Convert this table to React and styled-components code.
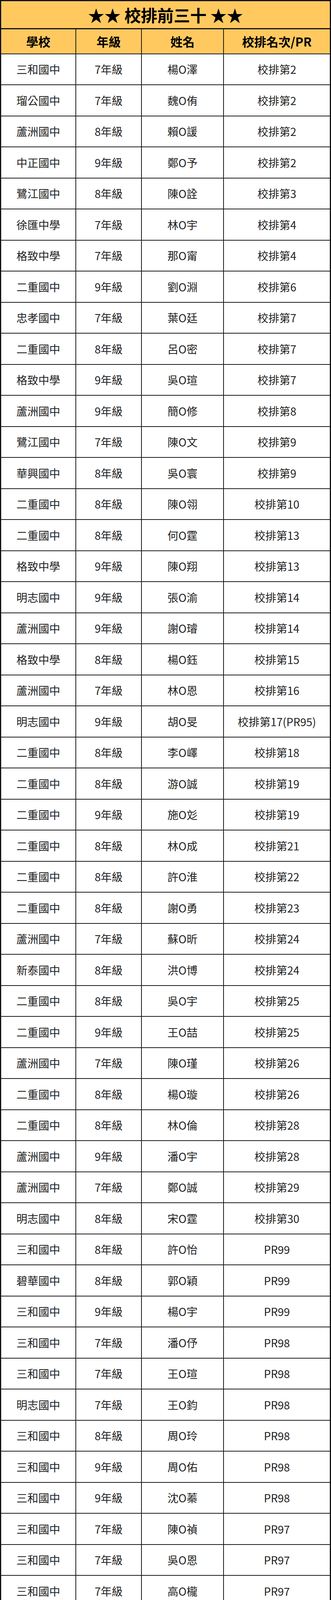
import React from 'react'
import styled, { createGlobalStyle } from 'styled-components'

const rows = [
  ['三和國中', '7年級', '楊O澤', '校排第2'],
  ['瑠公國中', '7年級', '魏O侑', '校排第2'],
  ['蘆洲國中', '8年級', '賴O諼', '校排第2'],
  ['中正國中', '9年級', '鄭O予', '校排第2'],
  ['鷺江國中', '8年級', '陳O詮', '校排第3'],
  ['徐匯中學', '7年級', '林O宇', '校排第4'],
  ['格致中學', '7年級', '那O甯', '校排第4'],
  ['二重國中', '9年級', '劉O淵', '校排第6'],
  ['忠孝國中', '7年級', '葉O廷', '校排第7'],
  ['二重國中', '8年級', '呂O密', '校排第7'],
  ['格致中學', '9年級', '吳O瑄', '校排第7'],
  ['蘆洲國中', '9年級', '簡O修', '校排第8'],
  ['鷺江國中', '7年級', '陳O文', '校排第9'],
  ['華興國中', '8年級', '吳O寰', '校排第9'],
  ['二重國中', '8年級', '陳O翎', '校排第10'],
  ['二重國中', '8年級', '何O霆', '校排第13'],
  ['格致中學', '9年級', '陳O翔', '校排第13'],
  ['明志國中', '9年級', '張O渝', '校排第14'],
  ['蘆洲國中', '9年級', '謝O璿', '校排第14'],
  ['格致中學', '8年級', '楊O鈺', '校排第15'],
  ['蘆洲國中', '7年級', '林O恩', '校排第16'],
  ['明志國中', '9年級', '胡O旻', '校排第17(PR95)'],
  ['二重國中', '8年級', '李O嶧', '校排第18'],
  ['二重國中', '8年級', '游O誠', '校排第19'],
  ['二重國中', '9年級', '施O彣', '校排第19'],
  ['二重國中', '8年級', '林O成', '校排第21'],
  ['二重國中', '8年級', '許O淮', '校排第22'],
  ['二重國中', '8年級', '謝O勇', '校排第23'],
  ['蘆洲國中', '7年級', '蘇O昕', '校排第24'],
  ['新泰國中', '8年級', '洪O博', '校排第24'],
  ['二重國中', '8年級', '吳O宇', '校排第25'],
  ['二重國中', '9年級', '王O喆', '校排第25'],
  ['蘆洲國中', '7年級', '陳O瑾', '校排第26'],
  ['二重國中', '8年級', '楊O璇', '校排第26'],
  ['二重國中', '8年級', '林O倫', '校排第28'],
  ['蘆洲國中', '9年級', '潘O宇', '校排第28'],
  ['蘆洲國中', '7年級', '鄭O誠', '校排第29'],
  ['明志國中', '8年級', '宋O霆', '校排第30'],
  ['三和國中', '8年級', '許O怡', 'PR99'],
  ['碧華國中', '8年級', '郭O穎', 'PR99'],
  ['三和國中', '9年級', '楊O宇', 'PR99'],
  ['三和國中', '7年級', '潘O伃', 'PR98'],
  ['三和國中', '7年級', '王O瑄', 'PR98'],
  ['明志國中', '7年級', '王O鈞', 'PR98'],
  ['三和國中', '8年級', '周O玲', 'PR98'],
  ['三和國中', '9年級', '周O佑', 'PR98'],
  ['三和國中', '9年級', '沈O蓁', 'PR98'],
  ['三和國中', '7年級', '陳O禎', 'PR97'],
  ['三和國中', '7年級', '吳O恩', 'PR97'],
  ['三和國中', '7年級', '高O櫳', 'PR97'],
  ['三和國中', '8年級', '羅O晴', 'PR97'],
  ['三和國中', '8年級', '方O安', 'PR97'],
  ['三和國中', '8年級', '余O奇', 'PR97'],
  ['三和國中', '8年級', '張O靜', 'PR97'],
  ['三和國中', '9年級', '曾O彤', 'PR97'],
  ['三和國中', '9年級', '張O芸', 'PR97'],
  ['碧華國中', '9年級', '鐘O匀', 'PR97'],
  ['三和國中', '7年級', '黃O絢', 'PR96'],
  ['三和國中', '8年級', '連O捷', 'PR96'],
  ['三和國中', '8年級', '徐O紘', 'PR96'],
  ['三和國中', '9年級', '林O汝', 'PR96'],
  ['三和國中', '7年級', '王O嫙', 'PR95'],
  ['三和國中', '8年級', '林O寓', 'PR95'],
  ['三和國中', '8年級', '張O宜', 'PR95'],
  ['三和國中', '8年級', '許O祈', 'PR95'],
  ['三和國中', '8年級', '陳O翔', 'PR95'],
  ['三和國中', '7年級', '尤O恩', 'PR94'],
  ['三和國中', '7年級', '吳O辰', 'PR94'],
  ['三和國中', '7年級', '游O妍', 'PR94'],
  ['三和國中', '8年級', '吳O呈', 'PR94'],
  ['三和國中', '9年級', '劉O祐', 'PR94'],
  ['三和國中', '9年級', '蔡O芯', 'PR94'],
  ['三和國中', '7年級', '范O綺', 'PR93'],
  ['三和國中', '8年級', '周O純', 'PR93'],
  ['三和國中', '8年級', '陳O蓁', 'PR93'],
  ['三和國中', '9年級', '洪O欣', 'PR93'],
  ['三和國中', '9年級', '鄭O彥', 'PR93'],
  ['三和國中', '7年級', '蔡O陽', 'PR92'],
  ['三和國中', '7年級', '張O瑋', 'PR92'],
  ['三和國中', '9年級', '洪O穎', 'PR92'],
  ['三和國中', '7年級', '楊O恩', 'PR91'],
  ['三和國中', '8年級', '張O聖', 'PR91'],
  ['三和國中', '9年級', '周O亭', 'PR91'],
  ['三和國中', '7年級', '黃O禎', 'PR90'],
  ['三和國中', '8年級', '陳O寧', 'PR90'],
  ['三和國中', '8年級', '李O辰', 'PR90'],
  ['三和國中', '8年級', '梁O衛', 'PR90'],
]

const headers = ['學校', '年級', '姓名', '校排名次/PR']

const App = () => {
  return (
    <>
      <GlobalStyle />
      <Table>
        <TitleBar>★★ 校排前三十 ★★</TitleBar>
        <HeadRow>
          {headers.map((h) => (
            <Cell key={h} $head>{h}</Cell>
          ))}
        </HeadRow>
        {rows.map((r, i) => (
          <Row key={i}>
            {r.map((v, j) => (
              <Cell key={j}>{v}</Cell>
            ))}
          </Row>
        ))}
      </Table>
    </>
  )
}

const GlobalStyle = createGlobalStyle`
  html, body {
    margin: 0;
    padding: 0;
    background: #fff;
  }
  body {
    font-family: "Noto Sans CJK TC", "Noto Sans", sans-serif;
  }
`

const Table = styled.div`
  width: 100%;
  max-width: 847px;
  box-sizing: border-box;
  border: 3px solid #111;
  display: flex;
  flex-direction: column;
  background: #fff;
`

const TitleBar = styled.div`
  height: 68.5px;
  display: flex;
  align-items: center;
  justify-content: center;
  background: #ffc95f;
  color: #000;
  font-size: 42px;
  font-weight: 700;
`

const Grid = styled.div`
  display: grid;
  grid-template-columns: 190px 168px 210px 1fr;
  box-sizing: border-box;
`

const HeadRow = styled(Grid)`
  height: 65px;
  border-top: 3px solid #111;
  background: #ffc95f;
`

const Row = styled(Grid)`
  height: 79.5px;
  border-top: 2px solid #1c1c1c;
`

const Cell = styled.div`
  display: flex;
  align-items: center;
  justify-content: center;
  white-space: nowrap;
  font-size: ${(p) => (p.$head ? '31px' : '28px')};
  font-weight: ${(p) => (p.$head ? 700 : 400)};
  color: ${(p) => (p.$head ? '#000' : '#222')};
  & + & {
    border-left: 2px solid #1c1c1c;
  }
`

export default App
